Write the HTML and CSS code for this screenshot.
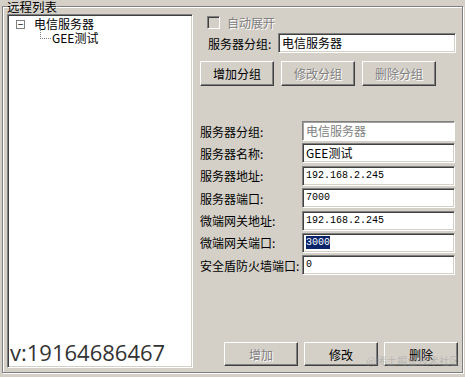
FILE: index.html
```html
<!DOCTYPE html>
<html lang="zh-CN">
<head>
    <meta charset="UTF-8">
    <title>远程列表</title>
    <link rel="stylesheet" href="styles.css">
</head>
<body>
    <fieldset class="group">
        <legend>远程列表</legend>

        <div class="tree">
            <div class="node">
                <span class="toggle">−</span>
                <span>电信服务器</span>
            </div>
            <div class="node child">
                <span class="branch"></span>
                <span>GEE测试</span>
            </div>
            <div class="contact">v:19164686467</div>
        </div>

        <div class="panel">
            <div class="check-row">
                <span class="checkbox"></span>
                <span class="disabled-text">自动展开</span>
            </div>

            <div class="group-row">
                <label>服务器分组:</label>
                <div class="field wide">电信服务器</div>
            </div>

            <div class="group-buttons">
                <button>增加分组</button>
                <button disabled>修改分组</button>
                <button disabled>删除分组</button>
            </div>

            <div class="form">
                <div class="row">
                    <label>服务器分组:</label>
                    <div class="field off">电信服务器</div>
                </div>
                <div class="row">
                    <label>服务器名称:</label>
                    <div class="field">GEE测试</div>
                </div>
                <div class="row">
                    <label>服务器地址:</label>
                    <div class="field mono">192.168.2.245</div>
                </div>
                <div class="row">
                    <label>服务器端口:</label>
                    <div class="field mono">7000</div>
                </div>
                <div class="row">
                    <label>微端网关地址:</label>
                    <div class="field mono">192.168.2.245</div>
                </div>
                <div class="row">
                    <label>微端网关端口:</label>
                    <div class="field mono"><span class="sel">3000</span></div>
                </div>
                <div class="row">
                    <label>安全盾防火墙端口:</label>
                    <div class="field mono">0</div>
                </div>
            </div>

            <div class="actions">
                <button disabled>增加</button>
                <button>修改</button>
                <button>删除</button>
            </div>
        </div>
    </fieldset>

    <div class="watermark">@稀土掘金技术社区</div>
</body>
</html>
```

FILE: styles.css
```css
body {
    margin: 0;
    padding: 0 2px;
    width: 465px;
    height: 377px;
    box-sizing: border-box;
    background: #d4d0c8;
    font-family: "Noto Sans CJK SC", sans-serif;
    font-size: 12px;
    color: #000;
    position: relative;
    overflow: hidden;
}
.group {
    margin: 0;
    min-width: 0;
    padding: 1px 3px 4px 4px;
    border: 1px solid #808080;
    box-shadow: 1px 1px 0 #fff, inset 1px 1px 0 #fff;
    display: flex;
}
legend {
    padding: 0;
    line-height: 13px;
    font-size: 12.5px;
}
.tree {
    width: 186px;
    height: 354px;
    box-sizing: border-box;
    background: #fff;
    border: 1px solid;
    border-color: #808080 #fff #fff #808080;
    box-shadow: inset 1px 1px 0 #404040, inset -1px -1px 0 #d4d0c8;
    display: flex;
    flex-direction: column;
    padding: 2px 0 0 8px;
}
.node {
    display: flex;
    align-items: center;
    height: 14px;
    line-height: 14px;
}
.toggle {
    width: 7px;
    height: 7px;
    border: 1px solid #808080;
    margin-right: 9px;
    font-size: 10px;
    line-height: 6px;
    text-align: center;
    background: #fff;
}
.child {
    padding-left: 24px;
}
.branch {
    width: 10px;
    height: 9px;
    margin-top: -9px;
    margin-right: 1px;
    border-left: 1px dotted #808080;
    border-bottom: 1px dotted #808080;
}
.contact {
    margin-top: auto;
    margin-left: -6px;
    margin-bottom: 1px;
    font-family: "Open Sans", sans-serif;
    font-size: 22px;
    line-height: 28px;
    color: #333;
}
.panel {
    flex: 1;
    margin-left: 4px;
    display: flex;
    flex-direction: column;
}
.check-row {
    display: flex;
    align-items: center;
    gap: 7px;
    margin-top: 2px;
    padding-left: 10px;
    height: 13px;
}
.checkbox {
    width: 11px;
    height: 11px;
    background: #d4d0c8;
    border: 1px solid;
    border-color: #808080 #fff #fff #808080;
    box-shadow: inset 1px 1px 0 #404040;
}
.disabled-text,
button:disabled {
    color: #808080;
    text-shadow: 1px 1px 0 #fff;
}
.group-row {
    display: flex;
    align-items: center;
    margin-top: 4px;
    padding-left: 11px;
}
.group-row label {
    width: 70px;
}
.field {
    height: 20px;
    box-sizing: border-box;
    background: #fff;
    border: 1px solid;
    border-color: #808080 #fff #fff #808080;
    box-shadow: inset 1px 1px 0 #404040, inset -1px -1px 0 #d4d0c8;
    padding: 0 3px;
    line-height: 18px;
    white-space: nowrap;
    overflow: hidden;
}
.field.wide {
    width: 178px;
}
.field.off {
    color: #808080;
    box-shadow: inset 1px 1px 0 #a0a0a0;
}
.field.mono {
    font-family: "Liberation Mono", monospace;
    font-size: 10px;
}
.sel {
    background: #0a246a;
    color: #fff;
    padding: 1px 0;
}
button {
    height: 25px;
    width: 74px;
    padding: 0;
    font-family: inherit;
    font-size: 12px;
    color: #000;
    background: #d4d0c8;
    border: 1px solid;
    border-color: #fff #404040 #404040 #fff;
    box-shadow: inset -1px -1px 0 #808080;
}
.group-buttons {
    display: flex;
    gap: 7px;
    margin-top: 8px;
    padding-left: 3px;
}
.form {
    display: flex;
    flex-direction: column;
    gap: 2.4px;
    margin-top: 35px;
    padding-left: 3px;
}
.row {
    display: flex;
    align-items: center;
}
.row label {
    width: 102px;
    white-space: nowrap;
}
.row .field {
    width: 153px;
}
.actions {
    display: flex;
    justify-content: flex-end;
    gap: 6px;
    margin-top: auto;
    margin-bottom: 2px;
    padding-right: 1px;
}
.actions button {
    height: 24px;
}
.watermark {
    position: absolute;
    right: 5px;
    bottom: 9px;
    font-size: 10.5px;
    color: rgba(150, 150, 150, 0.45);
}
```
